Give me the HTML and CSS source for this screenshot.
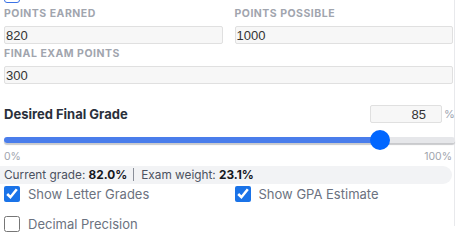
FILE: index.html
```html
<!DOCTYPE html>
<html lang="en">
<head>
    <meta charset="UTF-8">
    <title>Final Grade Calculator</title>
    <link rel="stylesheet" href="styles.css">
</head>
<body>
    <div class="panel">
        <label class="option top-option"><input type="checkbox"> <span>Include extra credit</span></label>

        <div class="fields">
            <div class="field">
                <label>Points Earned</label>
                <input type="text" value="820">
            </div>
            <div class="field">
                <label>Points Possible</label>
                <input type="text" value="1000">
            </div>
            <div class="field wide">
                <label>Final Exam Points</label>
                <input type="text" value="300">
            </div>
        </div>

        <div class="target-row">
            <span class="target-label">Desired Final Grade</span>
            <span class="target-input"><input type="text" value="85"><span class="unit">%</span></span>
        </div>

        <input class="slider" type="range" min="0" max="100" value="85" style="background: linear-gradient(to right, #4a7deb 83%, #e6e7ea 83%);">
        <div class="scale"><span>0%</span><span>100%</span></div>

        <div class="stats">Current grade: <b>82.0%</b><span class="sep"></span>Exam weight: <b>23.1%</b></div>

        <div class="options">
            <label class="option"><input type="checkbox" checked> <span>Show Letter Grades</span></label>
            <label class="option"><input type="checkbox" checked> <span>Show GPA Estimate</span></label>
            <label class="option"><input type="checkbox"> <span>Decimal Precision</span></label>
        </div>
    </div>
</body>
</html>
```

FILE: styles.css
```css
* {
    box-sizing: border-box;
    margin: 0;
    padding: 0;
}
html, body {
    height: 100%;
    overflow: hidden;
}
body {
    background-color: white;
    font-family: Inter, "Noto Sans", sans-serif;
}
.panel {
    width: 455px;
    height: 100%;
    padding: 0 1px 0 4px;
    border-right: 1px solid #e8e9ec;
}
.top-option {
    margin-top: -13px;
    height: 15px;
}
.top-option input {
    -webkit-appearance: none;
    appearance: none;
    border: 1.5px solid #3b72e6;
    border-radius: 3px;
    background-color: white;
}
.top-option span {
    color: #d3d5da;
}
.fields {
    display: grid;
    grid-template-columns: 1fr 1fr;
    column-gap: 12px;
    margin-top: 6px;
}
.field {
    display: flex;
    flex-direction: column;
}
.field.wide {
    grid-column: 1 / 3;
}
.field label {
    font-size: 10.5px;
    font-weight: 700;
    letter-spacing: 0.5px;
    text-transform: uppercase;
    color: #a1a5ae;
    line-height: 12px;
    height: 18px;
}
.field input,
.target-input input {
    height: 18px;
    font-family: "Liberation Sans", Arial, sans-serif;
    font-size: 13px;
    color: #333;
    background-color: #f7f7f7;
    border: 1px solid #e0e0e0;
    border-radius: 2px;
    padding: 0 1px;
    outline: none;
}
.field input {
    margin-bottom: 4px;
}
.target-row {
    display: flex;
    justify-content: space-between;
    align-items: center;
    margin-top: 16px;
    height: 20px;
}
.target-label {
    font-size: 13px;
    font-weight: 700;
    color: #2a303b;
}
.target-input {
    display: flex;
    align-items: center;
    gap: 2px;
}
.target-input input {
    width: 72px;
    text-align: right;
    padding-right: 15px;
}
.unit {
    font-size: 11px;
    color: #9ca3af;
    width: 9px;
}
.slider {
    -webkit-appearance: none;
    appearance: none;
    display: block;
    width: 451px;
    height: 6px;
    margin: 13px 0 0;
    border-radius: 3px;
    box-shadow: 0 2px 1px #c9cacd;
    outline: none;
}
.slider::-webkit-slider-thumb {
    -webkit-appearance: none;
    appearance: none;
    width: 20px;
    height: 20px;
    border-radius: 50%;
    background-color: #0066ff;
    border: none;
}
.scale {
    display: flex;
    justify-content: space-between;
    font-size: 10.5px;
    color: #a1a5ae;
    margin-top: 7px;
    padding-right: 1px;
    line-height: 13px;
}
.stats {
    margin: 3px 1px 0 -4px;
    padding-left: 4px;
    height: 18px;
    line-height: 18px;
    font-size: 11.8px;
    color: #4b5160;
    background-color: #f2f3f5;
    border-radius: 0 9px 9px 0;
}
.stats b {
    color: #15181e;
}
.sep {
    display: inline-block;
    width: 1px;
    height: 13px;
    background-color: #8a8f99;
    margin: 0 7px 0 6px;
    vertical-align: -2px;
}
.options {
    display: grid;
    grid-template-columns: 1fr 1fr;
    column-gap: 12px;
    row-gap: 14px;
    margin-top: 2px;
}
.option {
    display: flex;
    align-items: center;
    gap: 8px;
    font-size: 13px;
    color: #6b7280;
}
.option input {
    width: 16px;
    height: 16px;
    margin: 0;
    accent-color: #1a73e8;
}
```
